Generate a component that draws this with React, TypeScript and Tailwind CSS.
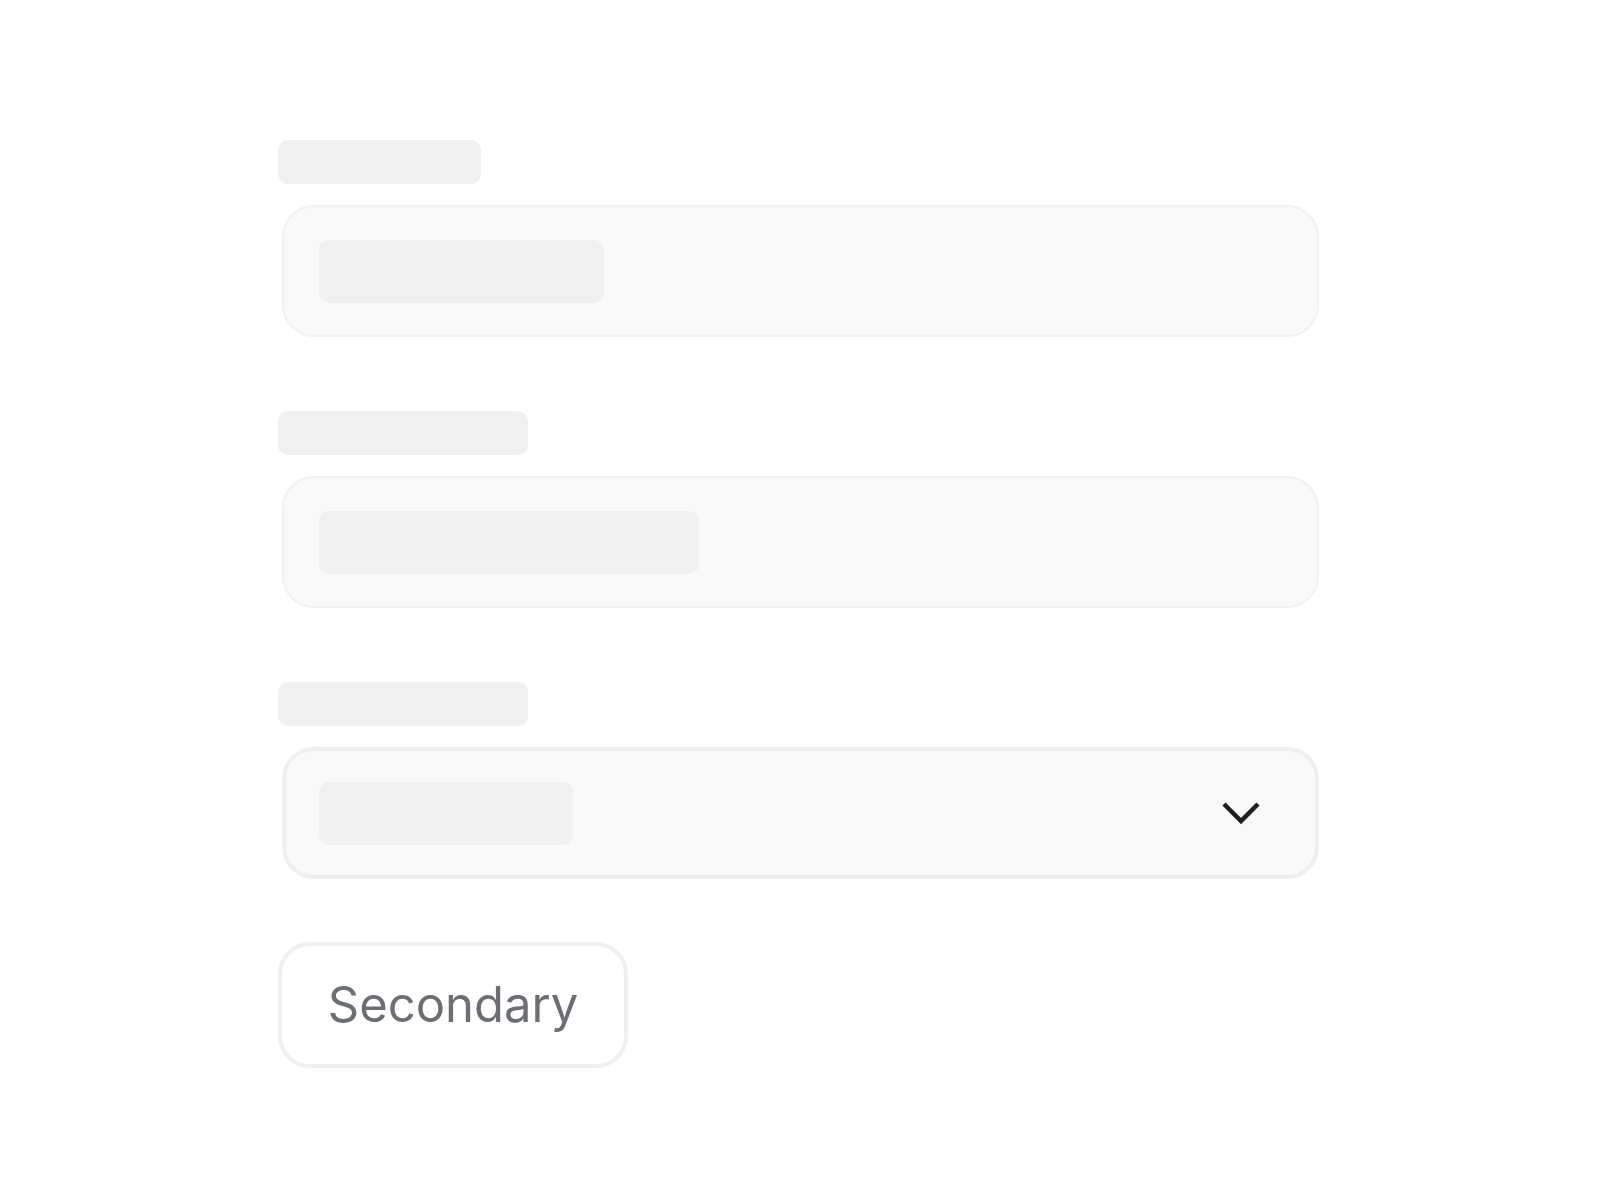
import React from 'react';

const Field: React.FC<{ labelW: string; barW: string; select?: boolean }> = ({ labelW, barW, select }) => (
  <div className="flex flex-col gap-[21px]">
    <div className={`h-[44px] rounded-[10px] bg-[#f0f0f0] ${labelW}`} />
    <div
      className={`ml-[4px] flex h-[132px] w-[1037px] items-center justify-between rounded-[32px] bg-[#f9f9f9] pr-[54px] ${
        select ? 'border-[4px] border-[#efefef] pl-[33px]' : 'border-2 border-[#f1f1f1] pl-[35px]'
      }`}
    >
      <div className={`h-[63px] rounded-[10px] bg-[#f0f0f0] ${barW}`} />
      {select && (
        <svg width="40" height="26" viewBox="0 0 40 26" fill="none" className="text-[#1f1f1f]">
          <path d="M3 4 L20 21 L37 4" stroke="currentColor" strokeWidth="4.5" strokeLinejoin="miter" />
        </svg>
      )}
    </div>
  </div>
);

export default function App() {
  return (
    <div className="min-h-[1200px] bg-white pl-[278px] pt-[140px] font-['Inter','Liberation_Sans',sans-serif]">
      <div className="flex w-[1042px] flex-col gap-[74px]">
        <Field labelW="w-[203px]" barW="w-[285px]" />
        <Field labelW="w-[250px]" barW="w-[380px]" />
        <Field labelW="w-[250px]" barW="w-[254px]" select />
      </div>
      <button className="mt-[63px] flex h-[126px] w-[350px] items-center justify-center rounded-[32px] border-[4px] border-[#efefef] bg-white text-[49px] text-[#6b6f74]">
        Secondary
      </button>
    </div>
  );
}
